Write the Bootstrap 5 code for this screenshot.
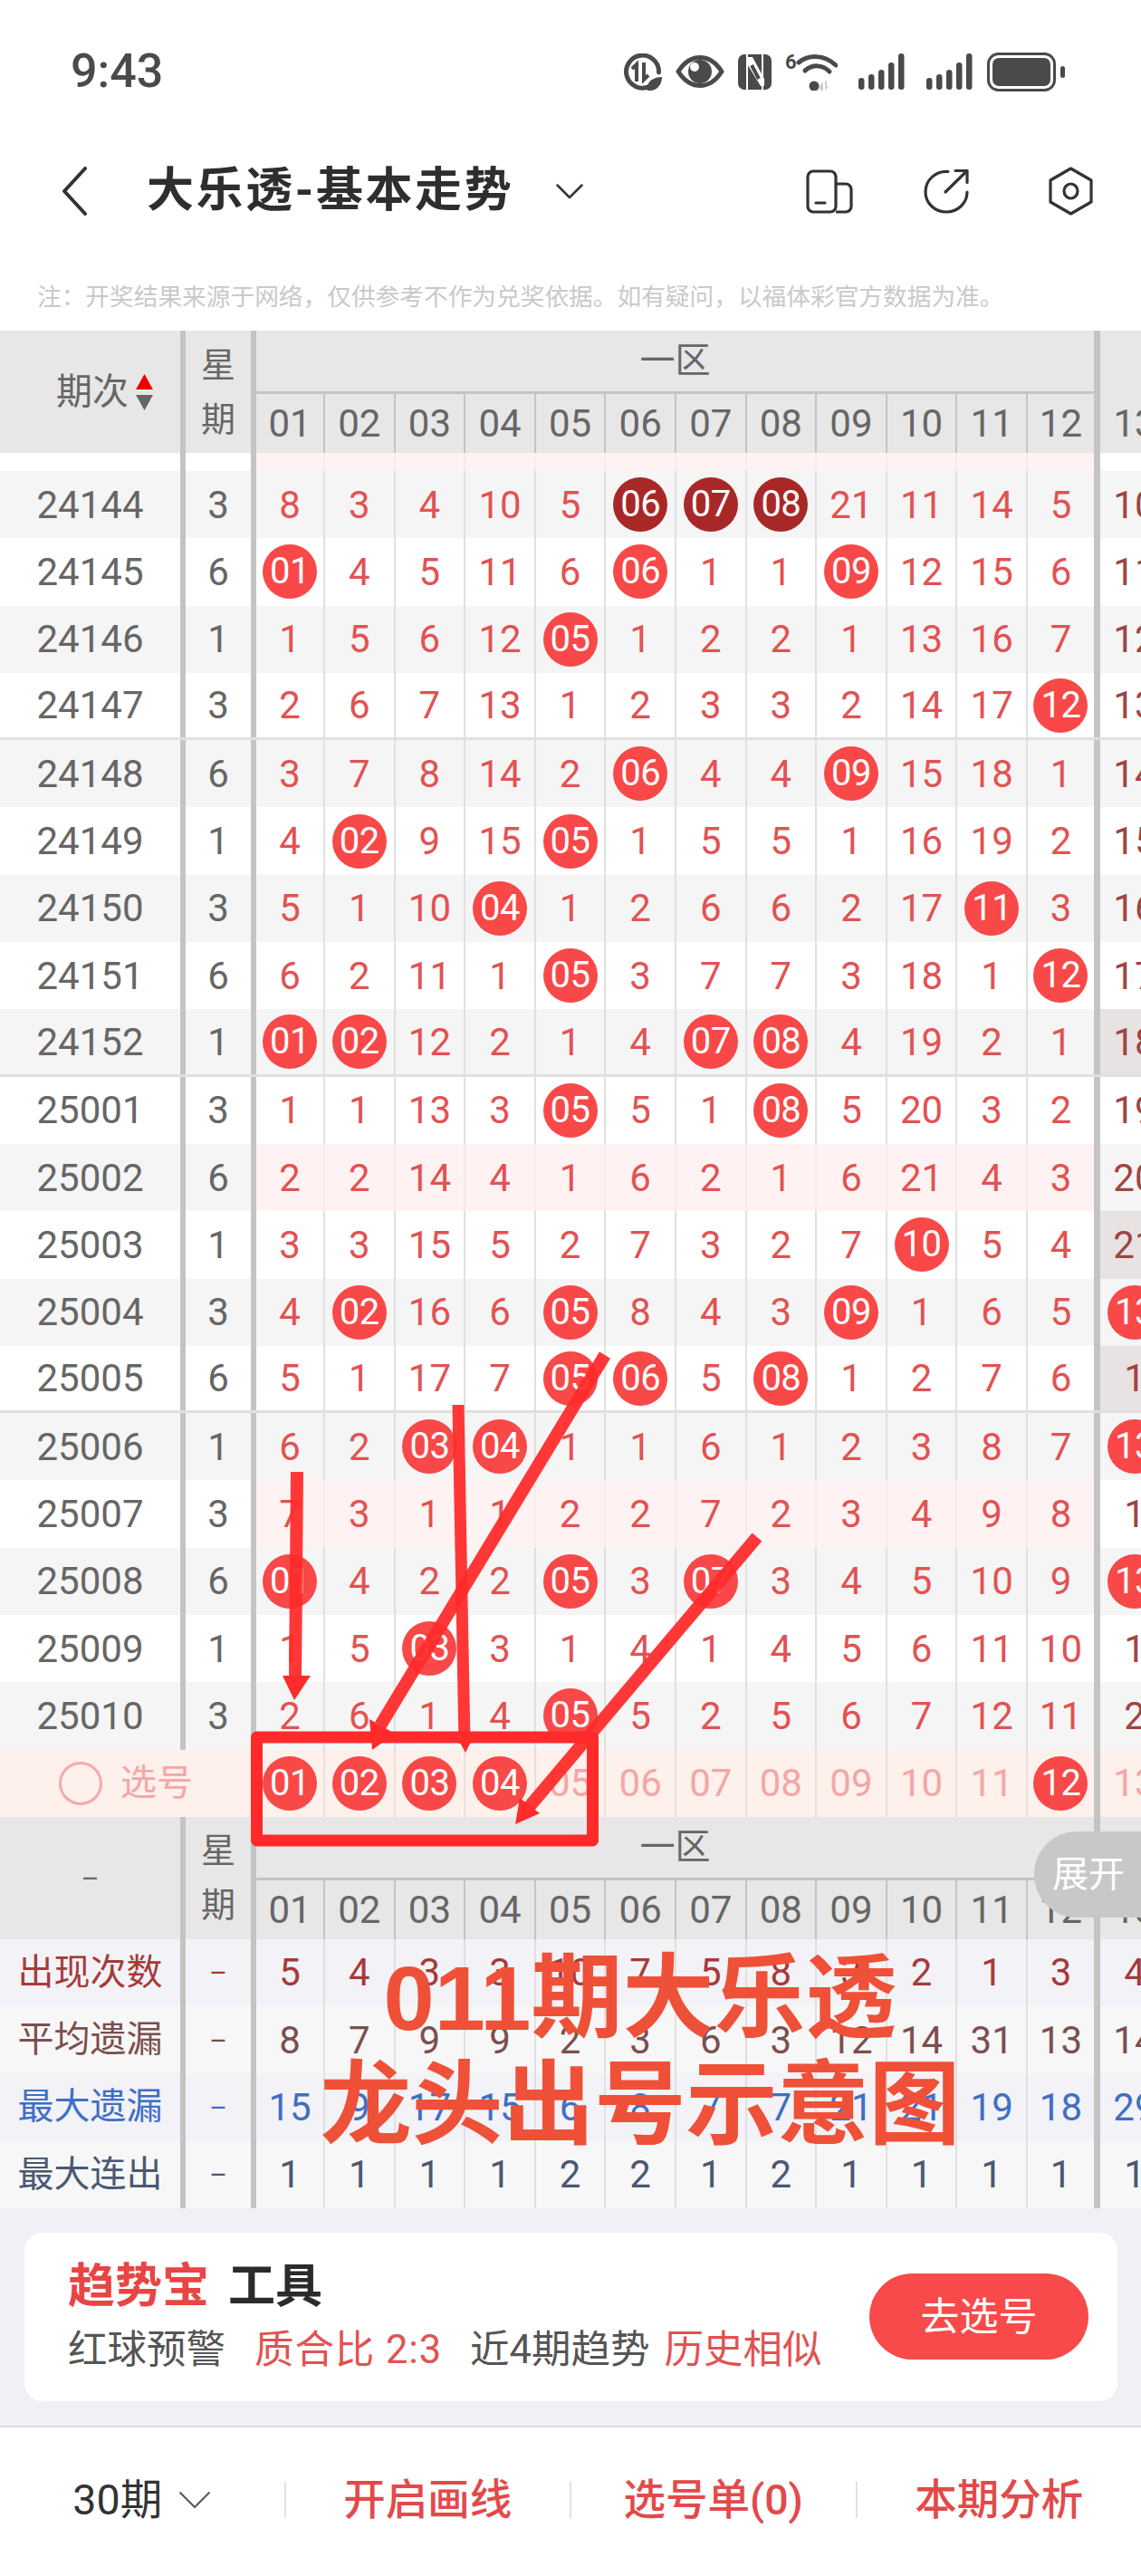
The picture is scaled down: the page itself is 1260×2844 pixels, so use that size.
<!DOCTYPE html>
<html lang="zh-CN">
<head>
    <meta charset="UTF-8">
    <meta name="viewport" content="width=device-width, initial-scale=1.0">
    <title>大乐透-基本走势</title>
    <link href="https://cdn.jsdelivr.net/npm/bootstrap@5.3.0/dist/css/bootstrap.min.css" rel="stylesheet">
    <style>
        body { width: 1260px; height: 2844px; overflow: hidden; background: #fff; font-family: Roboto, "Noto Sans CJK SC", sans-serif; }
        .screen { width: 1260px; height: 2844px; overflow: hidden; }

        /* status bar + title bar */
        .status-bar { height: 156px; padding: 2px 84px 0 78px; }
        .status-time { font-size: 52px; font-weight: 500; color: #4a4a4a; line-height: 1; }
        .status-icons { gap: 15px; margin-right: 0; margin-left: 2px; }
        .title-bar { height: 110px; padding-left: 68px; }
        .title-text { font-size: 52px; font-weight: 700; color: #2e2e2e; margin-left: 66px; line-height: 1; letter-spacing: 2.6px; }
        .title-caret { margin-left: 47px; }
        .title-tools { margin-left: auto; padding-right: 53px; }
        .title-tools svg + svg { margin-left: 78px; }
        .title-tools svg + svg + svg { margin-left: 88px; }
        .note-text { height: 99px; padding: 42px 0 0 41px; font-size: 26.7px; line-height: 36px; color: #c9c9c9; white-space: nowrap; font-family: "Noto Sans CJK SC", sans-serif; }

        /* chart */
        .t-row { display: flex; height: 74.3px; overflow: hidden; font-size: 42px; color: #e25252; }
        .t-row > div { flex-shrink: 0; display: flex; align-items: center; justify-content: center; }
        .c-per { width: 205px; border-right: 6px solid #c4c4c4; color: #666; }
        .c-wk { width: 78px; border-right: 6px solid #c4c4c4; color: #666; }
        .c-n { width: 77.6px; border-left: 2.5px solid #e0e0e0; }
        .c-n.first { width: 74px; border-left: 0; }
        .c-n.last { width: 82px; border-right: 7px solid #c4c4c4; }
        .c-x { width: 76px; color: #a04444; }
        .t-row.alt { background: #f5f5f5; }
        .t-row.group-end { border-bottom: 3px solid #e0e0e0; }
        .t-row.blank { height: 20px; }
        .pink-band .c-n { background: #fef2f2; border-left-color: #fbeaea; }
        .c-x.tint { background: #e8e2e2; }
        .ball { width: 60px; height: 60px; border-radius: 50%; background: #f84848; color: #fff; font-size: 40px; letter-spacing: -.5px; display: flex; align-items: center; justify-content: center; }
        .ball.dark { background: #a82828; }
        .dash-mark { font-size: 30px; }

        /* header block, used above and below the rows */
        .t-head { display: flex; height: 135px; background: #e7e7e7; color: #666; font-size: 42px; overflow: hidden; }
        .t-head > div { flex-shrink: 0; }
        .h-per { width: 205px; border-right: 6px solid #c4c4c4; font-size: 40px; }
        .sort-mark { padding-left: 32px; }
        .h-wk { width: 78px; border-right: 6px solid #c4c4c4; font-size: 38px; line-height: 60px; text-align: center; }
        .h-zone { width: 932px; }
        .h-zone-name { height: 70px; border-bottom: 3px solid #c4c4c4; border-right: 7px solid #c4c4c4; font-size: 39px; }
        .h-cols { height: 65px; }
        .h-cols > div { flex-shrink: 0; display: flex; align-items: center; justify-content: center; }
        .h-cols .c-n { border-left-color: #c4c4c4; }
        .h-rest { width: 76px; }
        .h-rest-num { height: 65px; margin-top: 70px; }

        /* 选号 row */
        .t-row.pick-row { height: 74px; background: #fef0eb; color: #f4a6a6; }
        .pick-row .c-n { border-left-color: #e9e0dc; }
        .pick-row .c-n.last { border-right-color: #c4c4c4; }
        .pick-row .c-x { color: #f4a6a6; }
        .pick-label { width: 283px; justify-content: flex-start !important; padding-left: 65px; font-size: 40px; gap: 20px; }
        .pick-ring { width: 48px; height: 48px; border-radius: 50%; border: 3px solid #f4aaaa; }

        /* stat rows */
        .stat-row { background: #f2f2f7; }
        .stat-row.alt { background: #f7f7f7; }
        .stat-row .c-per { font-size: 40px; }
        .stat-red, .stat-red .c-per, .stat-red .c-wk, .stat-red .c-x { color: #a63a3a; }
        .stat-brown, .stat-brown .c-per, .stat-brown .c-wk, .stat-brown .c-x { color: #7c4e4e; }
        .stat-blue, .stat-blue .c-per, .stat-blue .c-wk, .stat-blue .c-x { color: #3f6fc4; }
        .stat-slate, .stat-slate .c-per, .stat-slate .c-wk, .stat-slate .c-x { color: #4a5872; }

        /* tool panel */
        .tool-zone { height: 240px; background: #f0f1f6; padding: 27px 26px 0 27px; }
        .tool-card { height: 186px; border: 0; border-radius: 20px; padding: 0 32px 0 48px; }
        .tool-name { font-size: 52px; font-weight: 700; color: #2b2b2b; line-height: 1; margin-bottom: 22px; }
        .tool-name span { color: #e84545; margin-right: 21px; }
        .tool-line { font-size: 43.5px; color: #555; line-height: 1; white-space: nowrap; }
        .tool-line em { font-style: normal; color: #e25252; }
        .tool-ratio { margin-left: 32px; letter-spacing: .9px; }
        .tool-trend { margin-left: 31px; }
        .tool-history { margin-left: 16px; }
        .tool-go { width: 242px; height: 95px; background: #f84a4a; color: #fff; font-size: 43px; padding: 0; border: 0; }

        /* bottom bar */
        .bottom-bar { height: 167px; border-top: 2px solid #dcdcdc; background: #fff; font-size: 46.500px; font-weight: 500; color: #e24a4a; padding-bottom: 4px; }
        .bottom-item { flex: 1 1 0; display: flex; align-items: center; justify-content: center; position: relative; height: 40px; line-height: 1; }
        .bottom-item + .bottom-item { border-left: 2px solid #e2e2e2; }
        .bottom-item.period { color: #333; gap: 18px; font-weight: 400; }

        /* marks drawn over the picture */
        .draw-layer { position: absolute; left: 0; top: 0; pointer-events: none; }
        .big-note { position: absolute; left: 0; top: 2147px; width: 1414px; text-align: center; font-size: 101px; line-height: 118px; font-weight: 700; color: #ef5038; font-family: "Liberation Sans", "Noto Sans CJK SC", sans-serif; }
        .expand-tab { position: absolute; left: 1142px; top: 2022px; width: 118px; height: 95px; background: #c8c8c8; color: #fff; font-size: 40px; border-radius: 47px 0 0 47px; padding-left: 20px; white-space: nowrap; }
    </style>
</head>

<body>
    <div class="screen position-relative">
        <div class="status-bar d-flex align-items-center justify-content-between">
            <div class="status-time">9:43</div>
            <div class="status-icons d-flex align-items-center">
                <!-- data saver -->
                <svg width="43" height="41" viewBox="0 0 43 41" fill="none">
                    <path d="M29 36.500A18 18 0 1 1 39.500 21" stroke="#4a4a4a" stroke-width="5" stroke-linecap="round"/>
                    <path d="M15 31V12l-5 5" stroke="#4a4a4a" stroke-width="4"/>
                    <path d="M23 10v19l5-5" stroke="#4a4a4a" stroke-width="4"/>
                    <path d="M27 41c-2-9 6-15 16-15 0 9-6 16-16 15z" fill="#4a4a4a"/>
                </svg>
                <!-- eye -->
                <svg width="54" height="36" viewBox="0 0 54 36" fill="none">
                    <path d="M3 18C10 7 18 2.500 27 2.500S44 7 51 18C44 29 36 33.500 27 33.500S10 29 3 18z" stroke="#4a4a4a" stroke-width="5" stroke-linejoin="round"/>
                    <circle cx="27" cy="18" r="13" fill="#4a4a4a"/>
                    <circle cx="21" cy="13" r="5" fill="#fff"/>
                </svg>
                <!-- nfc -->
                <svg width="37" height="39" viewBox="0 0 37 39">
                    <rect width="37" height="39" rx="7" fill="#4a4a4a"/>
                    <path d="M10 0v39M27 0v39" stroke="#fff" stroke-width="2"/>
                    <path d="M9 3h7l13 24v8h-4L9 9z" fill="#fff"/>
                    <path d="M15 12l8 15" stroke="#4a4a4a" stroke-width="4"/>
                </svg>
                <!-- wifi 6 -->
                <svg width="58" height="41" viewBox="0 0 58 41" fill="none">
                    <text x="0" y="17" font-family="Roboto" font-weight="700" font-size="22" fill="#4a4a4a">6</text>
                    <path d="M15 10C26 1 43 1 56 13" stroke="#4a4a4a" stroke-width="5" stroke-linecap="round"/>
                    <path d="M22 19C30 12 41 12 49 20" stroke="#4a4a4a" stroke-width="5" stroke-linecap="round"/>
                    <circle cx="32" cy="36" r="5.500" fill="#4a4a4a"/>
                    <path d="M39 34l-2 5h2v2h3v-9zM44 30v11l4-5h-2v-6z" fill="#cfcfcf"/>
                </svg>
                <!-- signal -->
                <svg class="ms-2" width="52" height="40" viewBox="0 0 52 40" fill="#4a4a4a">
                    <rect x="0" y="27" width="6.500" height="13" rx="3.200"/><rect x="11" y="23" width="6.500" height="17" rx="3.200"/><rect x="22" y="18" width="6.500" height="22" rx="3.200"/><rect x="33" y="10" width="6.500" height="30" rx="3.200"/><rect x="44" y="0" width="6.500" height="40" rx="3.200"/>
                </svg>
                <svg class="ms-2" width="52" height="40" viewBox="0 0 52 40" fill="#4a4a4a">
                    <rect x="0" y="27" width="6.500" height="13" rx="3.200"/><rect x="11" y="23" width="6.500" height="17" rx="3.200"/><rect x="22" y="18" width="6.500" height="22" rx="3.200"/><rect x="33" y="10" width="6.500" height="30" rx="3.200"/><rect x="44" y="0" width="6.500" height="40" rx="3.200"/>
                </svg>
                <!-- battery -->
                <svg width="86" height="43" viewBox="0 0 86 43" fill="none">
                    <rect x="1.500" y="1.500" width="73" height="40" rx="11" stroke="#4a4a4a" stroke-width="3"/>
                    <rect x="6" y="6" width="64" height="31" rx="7" fill="#4a4a4a"/>
                    <rect x="81" y="15" width="5" height="13" rx="2.500" fill="#4a4a4a"/>
                </svg>
            </div>
        </div>

        <div class="title-bar d-flex align-items-center">
            <svg width="28" height="54" viewBox="0 0 28 54" fill="none">
                <path d="M26 2L3 27l23 25" stroke="#333" stroke-width="4" stroke-linecap="round" stroke-linejoin="round"/>
            </svg>
            <div class="title-text">大乐透-基本走势</div>
            <svg class="title-caret" width="30" height="17" viewBox="0 0 30 17" fill="none">
                <path d="M1.500 1.500L15 15 28.500 1.500" stroke="#333" stroke-width="2.500" stroke-linecap="round" stroke-linejoin="round"/>
            </svg>
            <div class="title-tools d-flex align-items-center">
                <svg width="52" height="49" viewBox="0 0 52 49" fill="none" stroke="#333" stroke-width="3.200" stroke-linejoin="round">
                    <rect x="2" y="2" width="31" height="45" rx="6"/>
                    <path d="M33 16h11a6 6 0 0 1 6 6v19a6 6 0 0 1-6 6H33"/>
                    <path d="M11 37h10" stroke-linecap="round"/>
                </svg>
                <svg width="50" height="50" viewBox="0 0 50 50" fill="none" stroke="#333" stroke-width="3.200" stroke-linecap="round" stroke-linejoin="round">
                    <path d="M27 3.500C14 2.500 2 12 2 26c0 12 10 22 23 22s23-10 23-22"/>
                    <path d="M24 26L48 2.500M35 2.500h13v13"/>
                </svg>
                <svg width="49" height="54" viewBox="0 0 49 54" fill="none" stroke="#333" stroke-width="3.200" stroke-linejoin="round">
                    <path d="M24.500 2L47 15v24L24.500 52 2 39V15z"/>
                    <ellipse cx="24.500" cy="27" rx="7.500" ry="8"/>
                </svg>
            </div>
        </div>

        <div class="note-text">注&#xFF1A;开奖结果来源于网络&#xFF0C;仅供参考不作为兑奖依据。如有疑问&#xFF0C;以福体彩官方数据为准。</div>

        <div id="head-top"></div>
        <div id="draw-rows"></div>
        <div id="pick-row"></div>
        <div id="head-bottom"></div>
        <div id="stat-rows"></div>

        <div class="tool-zone">
            <div class="card tool-card flex-row align-items-center justify-content-between">
                <div>
                    <div class="tool-name"><span>趋势宝</span>工具</div>
                    <div class="tool-line">红球预警<em class="tool-ratio">质合比 2:3</em><span class="tool-trend">近4期趋势</span><em class="tool-history">历史相似</em></div>
                </div>
                <button type="button" class="btn rounded-pill tool-go">去选号</button>
            </div>
        </div>

        <div class="bottom-bar d-flex align-items-center">
            <div class="bottom-item period">
                <span>30期</span>
                <svg width="36" height="20" viewBox="0 0 36 20" fill="none"><path d="M1.500 1.500L18 18 34.500 1.500" stroke="#555" stroke-width="2"/></svg>
            </div>
            <div class="bottom-item">开启画线</div>
            <div class="bottom-item">选号单(0)</div>
            <div class="bottom-item">本期分析</div>
        </div>

        <div class="expand-tab d-flex align-items-center">展开</div>

        <!-- hand drawn marks on top of the chart -->
        <svg class="draw-layer" width="1260" height="2844" viewBox="0 0 1260 2844" fill="none">
            <rect x="283.500" y="1918" width="371" height="114" stroke="#ff2b2b" stroke-width="13" stroke-linejoin="round"/>
            <path d="M328 1625L326 1855" stroke="#ff2b2b" stroke-width="14" opacity=".94"/>
            <path d="M312 1850h31l-18 27z" fill="#ff2b2b"/>
            <path d="M506 1551L513 1925" stroke="#ff2b2b" stroke-width="13" opacity=".94"/>
            <path d="M503 1915h21l-10 20z" fill="#ff2b2b"/>
            <path d="M668 1496L420 1905" stroke="#ff2b2b" stroke-width="14" opacity=".94"/>
            <path d="M411 1932l-3-34 28 16z" fill="#ff2b2b"/>
            <path d="M836 1697L580 2000" stroke="#ff2b2b" stroke-width="14" opacity=".94"/>
            <path d="M569 2014l5-29 22 17z" fill="#ff2b2b"/>
        </svg>
        <div class="big-note">011期大乐透<br>龙头出号示意图</div>
    </div>

    <script src="https://cdn.jsdelivr.net/npm/bootstrap@5.3.0/dist/js/bootstrap.bundle.min.js"></script>
    <script>
        // * = red ball, # = dark ball, last value is the cut off 13th column
        const draws = [
            ['24144', 3, '8 3 4 10 5 #06 #07 #08 21 11 14 5 10'],
            ['24145', 6, '*01 4 5 11 6 *06 1 1 *09 12 15 6 11'],
            ['24146', 1, '1 5 6 12 *05 1 2 2 1 13 16 7 12'],
            ['24147', 3, '2 6 7 13 1 2 3 3 2 14 17 *12 13'],
            ['24148', 6, '3 7 8 14 2 *06 4 4 *09 15 18 1 14'],
            ['24149', 1, '4 *02 9 15 *05 1 5 5 1 16 19 2 15'],
            ['24150', 3, '5 1 10 *04 1 2 6 6 2 17 *11 3 16'],
            ['24151', 6, '6 2 11 1 *05 3 7 7 3 18 1 *12 17'],
            ['24152', 1, '*01 *02 12 2 1 4 *07 *08 4 19 2 1 18'],
            ['25001', 3, '1 1 13 3 *05 5 1 *08 5 20 3 2 19'],
            ['25002', 6, '2 2 14 4 1 6 2 1 6 21 4 3 20'],
            ['25003', 1, '3 3 15 5 2 7 3 2 7 *10 5 4 21'],
            ['25004', 3, '4 *02 16 6 *05 8 4 3 *09 1 6 5 *13'],
            ['25005', 6, '5 1 17 7 *05 *06 5 *08 1 2 7 6 1'],
            ['25006', 1, '6 2 *03 *04 1 1 6 1 2 3 8 7 *13'],
            ['25007', 3, '7 3 1 1 2 2 7 2 3 4 9 8 1'],
            ['25008', 6, '*01 4 2 2 *05 3 *07 3 4 5 10 9 *13'],
            ['25009', 1, '1 5 *03 3 1 4 1 4 5 6 11 10 1'],
            ['25010', 3, '2 6 1 4 *05 5 2 5 6 7 12 11 2']
        ];
        const stats = [
            ['出现次数', 'stat-red', '5 4 3 3 10 7 5 8 3 2 1 3 4'],
            ['平均遗漏', 'stat-brown', '8 7 9 9 2 3 6 3 12 14 31 13 14'],
            ['最大遗漏', 'stat-blue', '15 9 17 15 6 8 7 7 21 21 19 18 29'],
            ['最大连出', 'stat-slate', '1 1 1 1 2 2 1 2 1 1 1 1 1']
        ];
        const pinkRows = ['25002', '25007'];
        const tintRows = ['24152', '25003', '25005'];
        const groupEnds = ['24147', '24152', '25005'];
        const colNames = ['01', '02', '03', '04', '05', '06', '07', '08', '09', '10', '11', '12'];

        function cellClass(i) {
            if (i === 0) return 'c-n first';
            if (i === 11) return 'c-n last';
            return 'c-n';
        }

        function valueHtml(v) {
            if (v[0] === '*') return `<span class="ball">${v.slice(1)}</span>`;
            if (v[0] === '#') return `<span class="ball dark">${v.slice(1)}</span>`;
            return v;
        }

        function numberCells(values, tint) {
            return values.map((v, i) => {
                if (i === 12) return `<div class="c-x${tint ? ' tint' : ''}">${valueHtml(v)}</div>`;
                return `<div class="${cellClass(i)}">${valueHtml(v)}</div>`;
            }).join('');
        }

        function headHtml(first) {
            const cols = colNames.map((n, i) => `<div class="${cellClass(i)}">${n}</div>`).join('');
            return `<div class="t-head">
                <div class="h-per d-flex align-items-center justify-content-center">${first}</div>
                <div class="h-wk d-flex align-items-center justify-content-center"><div>星<br>期</div></div>
                <div class="h-zone">
                    <div class="h-zone-name d-flex align-items-center justify-content-center">一区</div>
                    <div class="h-cols d-flex">${cols}</div>
                </div>
                <div class="h-rest"><div class="h-rest-num d-flex align-items-center justify-content-center">13</div></div>
            </div>`;
        }

        const sortMark = `<span class="d-inline-flex align-items-center sort-mark"><span>期次</span><svg class="ms-2" width="19" height="40" viewBox="0 0 19 40"><path d="M9.500 0L19 17H0z" fill="#ee0000"/><path d="M0 23h19L9.500 40z" fill="#666"/></svg></span>`;
        const dash = '<span class="dash-mark">–</span>';
        document.getElementById('head-top').innerHTML = headHtml(sortMark);
        document.getElementById('head-bottom').innerHTML = headHtml(dash);

        let rowsHtml = `<div class="t-row blank pink-band"><div class="c-per"></div><div class="c-wk"></div>${colNames.map((n, i) => `<div class="${cellClass(i)}"></div>`).join('')}<div class="c-x"></div></div>`;
        draws.forEach((d, idx) => {
            let cls = 't-row';
            if (idx % 2 === 0) cls += ' alt';
            if (pinkRows.includes(d[0])) cls += ' pink-band';
            if (groupEnds.includes(d[0])) cls += ' group-end';
            rowsHtml += `<div class="${cls}"><div class="c-per">${d[0]}</div><div class="c-wk">${d[1]}</div>${numberCells(d[2].split(' '), tintRows.includes(d[0]))}</div>`;
        });
        document.getElementById('draw-rows').innerHTML = rowsHtml;

        const pickValues = ['*01', '*02', '*03', '*04', '05', '06', '07', '08', '09', '10', '11', '*12', '13'];
        document.getElementById('pick-row').innerHTML = `<div class="t-row pick-row"><div class="pick-label"><span class="pick-ring"></span><span>选号</span></div>${numberCells(pickValues, false)}</div>`;

        document.getElementById('stat-rows').innerHTML = stats.map((s, idx) => `
            <div class="t-row stat-row ${s[1]}${idx % 2 ? ' alt' : ''}"><div class="c-per">${s[0]}</div><div class="c-wk">${dash}</div>${numberCells(s[2].split(' '), false)}</div>
        `).join('');
    </script>
</body>
</html>
